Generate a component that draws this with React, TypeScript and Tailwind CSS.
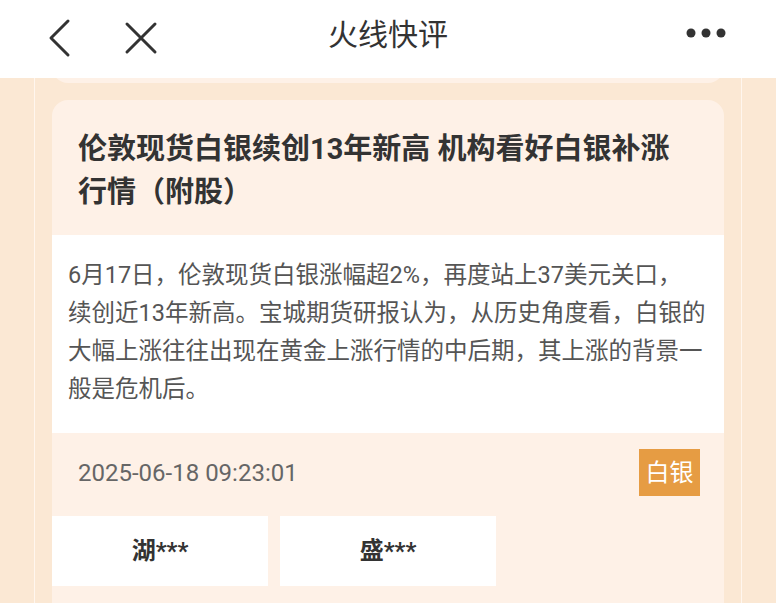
const FONT = { fontFamily: 'Roboto, "Noto Sans CJK SC", sans-serif' };

const names = ['湖***', '盛***'];

// summary lines, broken where the original app wraps them
const summary = [
  '6月17日，伦敦现货白银涨幅超2%，再度站上37美元关口，',
  '续创近13年新高。宝城期货研报认为，从历史角度看，白银的',
  '大幅上涨往往出现在黄金上涨行情的中后期，其上涨的背景一',
  '般是危机后。',
];

function BackIcon() {
  return (
    <svg width="24" height="40" viewBox="0 0 24 40" className="block">
      <path d="M20 3 L3 20 L20 37" fill="none" stroke="#333" strokeWidth="3" strokeLinecap="round" strokeLinejoin="round" />
    </svg>
  );
}

function CloseIcon() {
  return (
    <svg width="34" height="34" viewBox="0 0 34 34" className="block">
      <path d="M3 3 L31 31 M31 3 L3 31" fill="none" stroke="#333" strokeWidth="3" strokeLinecap="round" />
    </svg>
  );
}

function MoreIcon() {
  return (
    <svg width="40" height="10" viewBox="0 0 40 10" className="block">
      <circle cx="5" cy="5" r="4.5" fill="#333" />
      <circle cx="20" cy="5" r="4.5" fill="#333" />
      <circle cx="35" cy="5" r="4.5" fill="#333" />
    </svg>
  );
}

export default function App() {
  return (
    <div className="w-[776px] h-[603px] overflow-hidden bg-[#fbe8d4] flex flex-col" style={FONT}>
      {/* Header */}
      <div className="h-[78px] shrink-0 bg-white flex items-center relative">
        <div className="flex items-center pl-[48px] gap-[52px] pb-[2px]">
          <BackIcon />
          <CloseIcon />
        </div>
        <div className="absolute left-0 right-0 top-0 h-[68px] flex items-center justify-center text-[30px] text-[#333] pointer-events-none">
          火线快评
        </div>
        <div className="ml-auto pr-[50px] pb-[12px]">
          <MoreIcon />
        </div>
      </div>

      {/* Feed column */}
      <div className="flex-1 px-[34px] flex">
        <div className="flex-1 border-x border-[#fff6ee] px-[17px] flex flex-col gap-[17px]">
          {/* previous card tail */}
          <div className="h-[5px] overflow-hidden flex flex-col justify-end">
            <div className="h-[40px] shrink-0 rounded-[16px] bg-[#fef1e7]" />
          </div>

          <div className="rounded-t-[16px] bg-[#fef1e7] flex-1">
            <div className="px-[26px] pt-[28px] pb-[21px] text-[29px] leading-[43px] font-bold text-[#333]">
              伦敦现货白银续创13年新高 机构看好白银补涨行情（附股）
            </div>
            <div className="bg-white px-[16px] pt-[21px] pb-[25px] text-[23.5px] leading-[38px] text-[#555]">
              {summary.map(line => (
                <div key={line} className="whitespace-nowrap">{line}</div>
              ))}
            </div>
            <div className="flex items-center justify-between pl-[26px] pr-[24px] pt-[16px] pb-[20px]">
              <span className="text-[24px] text-[#666]">2025-06-18 09:23:01</span>
              <span className="w-[61px] h-[47px] bg-[#e69c43] text-white text-[24px] flex items-center justify-center">白银</span>
            </div>
            <div className="flex gap-[12px]">
              {names.map(n => (
                <div key={n} className="w-[216px] h-[70px] bg-white flex items-center justify-center text-[24px] font-bold text-[#333]">
                  {n}
                </div>
              ))}
            </div>
          </div>
        </div>
      </div>
    </div>
  );
}
